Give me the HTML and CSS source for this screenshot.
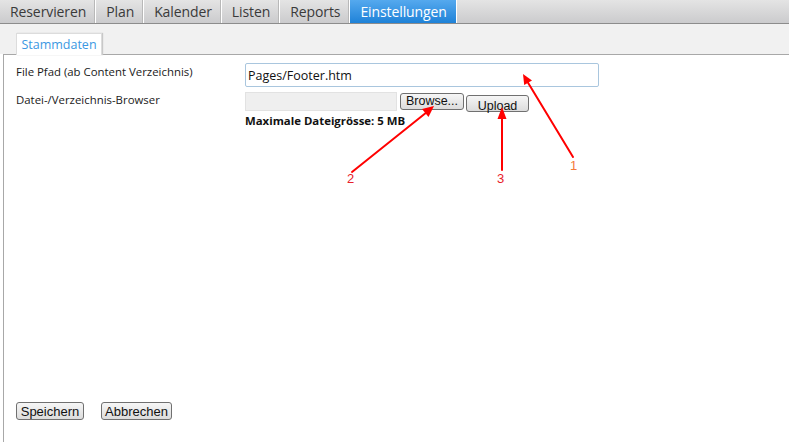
FILE: index.html
```html
<!DOCTYPE html>
<html lang="de">
<head>
<meta charset="utf-8">
<title>Einstellungen</title>
<link rel="stylesheet" href="styles.css">
</head>
<body>
<div class="page">
  <nav class="topnav">
    <a class="tab">Reservieren</a>
    <a class="tab">Plan</a>
    <a class="tab">Kalender</a>
    <a class="tab">Listen</a>
    <a class="tab">Reports</a>
    <a class="tab active">Einstellungen</a>
  </nav>
  <div class="subbar">
    <span class="subtab">Stammdaten</span>
  </div>
  <div class="panel">
    <div class="row row-path">
      <label class="label">File Pfad (ab Content Verzeichnis)</label>
      <input class="text-input" type="text" value="Pages/Footer.htm">
    </div>
    <div class="row row-browse">
      <label class="label label-browse">Datei-/Verzeichnis-Browser</label>
      <div class="browse-col">
        <div class="browse-line">
          <span class="file-box"></span>
          <button class="btn btn-browse">Browse...</button>
          <button class="btn btn-upload">Upload</button>
        </div>
        <div class="maxsize">Maximale Dateigrösse: 5 MB</div>
      </div>
    </div>
    <div class="footer">
      <button class="btn btn-save">Speichern</button>
      <button class="btn btn-cancel">Abbrechen</button>
    </div>
  </div>
  <svg class="annotations" width="789" height="442" viewBox="0 0 789 442">
    <g stroke="#ff0000" stroke-width="2" fill="none" stroke-linecap="round">
      <line x1="573" y1="157" x2="527" y2="81"/>
      <line x1="352" y1="172" x2="427" y2="112"/>
      <line x1="502" y1="170" x2="502" y2="116"/>
    </g>
    <g fill="#ff0000">
      <polygon points="523,74 532,80.5 524.2,85"/>
      <polygon points="434,106 428.5,117 422,109"/>
      <polygon points="502,107 497.5,119 506.5,119"/>
    </g>
    <text class="anno" x="347" y="183" fill="#e8202a">2</text>
    <text class="anno" x="497" y="183" fill="#e8202a">3</text>
    <text class="anno" x="570" y="170" fill="#f47a3a">1</text>
  </svg>
</div>
</body>
</html>
```

FILE: styles.css
```css
html, body {
  margin: 0;
  padding: 0;
  background: #ffffff;
}

.page {
  position: relative;
  width: 789px;
  height: 442px;
  display: flex;
  flex-direction: column;
  overflow: hidden;
  font-family: "Open Sans", "Noto Sans", sans-serif;
}

.topnav {
  display: flex;
  height: 23px;
  background: linear-gradient(#e4e4e4, #cbcbcd);
  border-bottom: 1px solid #8c8c8c;
  flex-shrink: 0;
}

.tab {
  display: flex;
  align-items: center;
  padding: 0 9px 0 10px;
  font-size: 14px;
  color: #3a3a3a;
  border-right: 1px solid #ffffff;
  box-shadow: inset -1px 0 0 #b8b8b8;
  letter-spacing: -0.1px;
  line-height: 23px;
}

.tab.active {
  background: linear-gradient(#55a9ee, #1f82d8);
  color: #ffffff;
  box-shadow: none;
}

.subbar {
  height: 30px;
  background: #f1f1f1;
  display: flex;
  align-items: flex-end;
  padding-left: 16px;
  flex-shrink: 0;
}

.subtab {
  height: 22px;
  width: 86px;
  box-sizing: border-box;
  background: #ffffff;
  border: 1px solid #dcdcdc;
  border-bottom: none;
  box-shadow: 1px 0 1px #c8c8c8;
  color: #3b98e2;
  font-size: 12.5px;
  display: flex;
  align-items: center;
  justify-content: center;
  margin-bottom: -1px;
  position: relative;
  z-index: 1;
}

.panel {
  flex: 1;
  margin-left: 3px;
  border-left: 1px solid #a8a8a8;
  border-top: 1px solid #a8a8a8;
  display: flex;
  flex-direction: column;
  padding-left: 12px;
  padding-top: 8px;
}

.row {
  display: flex;
  align-items: flex-start;
}

.label {
  width: 229px;
  font-size: 11.4px;
  color: #1a1a1a;
  flex-shrink: 0;
}

.row-path .label {
  line-height: 18px;
}

.text-input {
  width: 354px;
  height: 24px;
  box-sizing: border-box;
  border: 1px solid #a9c6de;
  border-radius: 2px;
  padding: 0 2px;
  font-family: "Open Sans", "Noto Sans", sans-serif;
  font-size: 12.5px;
  color: #111;
  margin: 0;
  outline: none;
}

.row-browse {
  margin-top: 5px;
}

.label-browse {
  line-height: 16px;
}

.browse-col {
  display: flex;
  flex-direction: column;
}

.browse-line {
  display: flex;
  align-items: flex-start;
}

.file-box {
  width: 152px;
  height: 19px;
  box-sizing: border-box;
  background: #efefef;
  border: 1px solid #e2e2e2;
}

.btn {
  font-family: "Liberation Sans", Arial, sans-serif;
  font-size: 13px;
  color: #111;
  background: linear-gradient(#f6f6f6, #dcdcdc);
  border: 1px solid #707070;
  border-radius: 3px;
  padding: 0;
  margin: 0;
  box-sizing: border-box;
  line-height: 15px;
}

.btn-browse {
  width: 64px;
  height: 17px;
  margin-left: 3px;
  margin-top: 1px;
  font-size: 12.5px;
}

.btn-upload {
  width: 63px;
  height: 17px;
  margin-left: 2px;
  margin-top: 3px;
  padding-top: 3px;
  line-height: 14px;
  font-size: 12.5px;
}

.maxsize {
  font-size: 11.4px;
  font-weight: 700;
  color: #111;
  line-height: 16px;
  margin-top: 1px;
}

.footer {
  margin-top: auto;
  margin-bottom: 22px;
  display: flex;
  gap: 17px;
}

.btn-save {
  width: 68px;
  height: 18px;
}

.btn-cancel {
  width: 71px;
  height: 18px;
}

.annotations {
  position: absolute;
  left: 0;
  top: 0;
  pointer-events: none;
}

.anno {
  font-family: "Liberation Sans", Arial, sans-serif;
  font-size: 13px;
}
```
